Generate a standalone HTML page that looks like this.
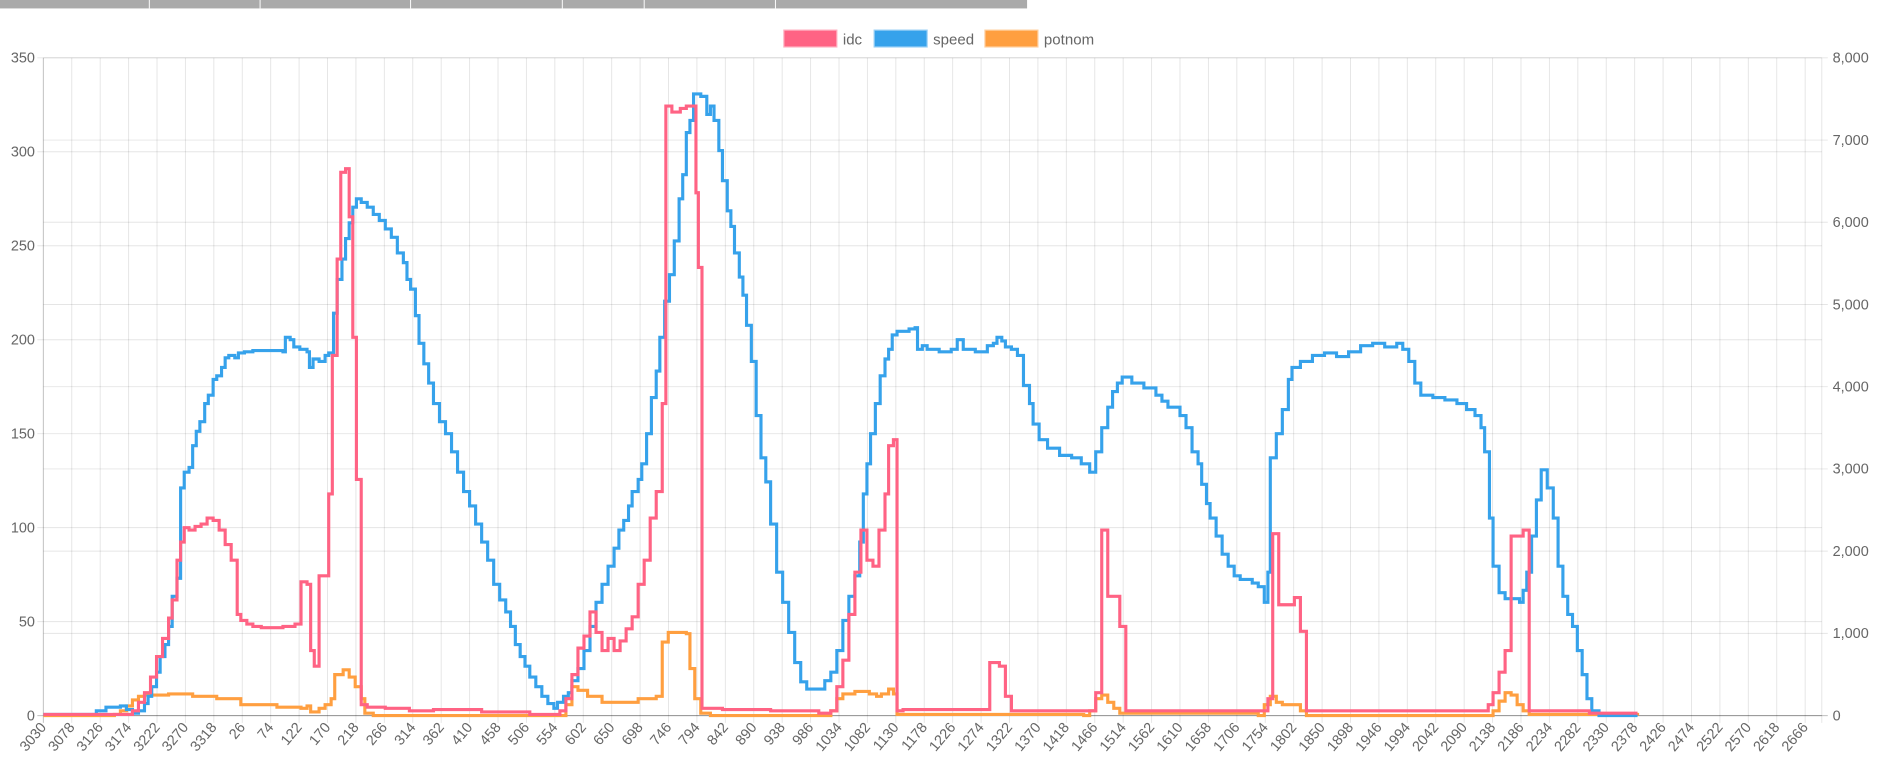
<!DOCTYPE html>
<html><head><meta charset="utf-8"><style>
html,body{margin:0;padding:0;background:#fff;overflow:hidden}
svg{display:block}
text{font-family:"Liberation Sans",Arial,sans-serif;fill:#666}
</style></head><body>
<svg id="s" width="1888" height="771" viewBox="0 0 1568 640" preserveAspectRatio="none" xmlns="http://www.w3.org/2000/svg">
<rect x="0" y="0" width="853" height="7" fill="#aaaaaa"/>
<g stroke="#fff" stroke-width="0.8">
<line x1="124" y1="0" x2="124" y2="7"/><line x1="216" y1="0" x2="216" y2="7"/><line x1="341" y1="0" x2="341" y2="7"/><line x1="467" y1="0" x2="467" y2="7"/><line x1="535" y1="0" x2="535" y2="7"/><line x1="644" y1="0" x2="644" y2="7"/>
</g>
<rect x="651" y="25" width="44" height="14" fill="#ff6384" stroke="#ffb1c1" stroke-width="1"/>
<text x="700" y="37" font-size="12.5">idc</text>
<rect x="726" y="25" width="44" height="14" fill="#36a2eb" stroke="#9ad0f5" stroke-width="1"/>
<text x="775" y="37" font-size="12.5">speed</text>
<rect x="818" y="25" width="44" height="14" fill="#ff9f40" stroke="#ffcf9f" stroke-width="1"/>
<text x="867" y="37" font-size="12.5">potnom</text>
<g id="grid"></g>
<g id="data" fill="none" stroke-width="2.6" stroke-linejoin="miter"></g>
</svg>
<script>
var NS="http://www.w3.org/2000/svg",g=document.getElementById('grid'),d=document.getElementById('data');
function el(t,a,p,txt){var e=document.createElementNS(NS,t);for(var k in a)e.setAttribute(k,a[k]);if(txt!=null)e.textContent=txt;(p||g).appendChild(e);return e;}
var L=36,R=1513,T=48,B=594;
var lv=[350,300,250,200,150,100,50,0];
lv.forEach(function(v,i){var y=T+i*78;el('line',{x1:31,x2:R,y1:y,y2:y,stroke:v==0?'rgba(0,0,0,0.25)':'rgba(0,0,0,0.1)','stroke-width':0.8});el('text',{x:29,y:y+4,'text-anchor':'end','font-size':12},null,String(v));});
var rv=['8,000','7,000','6,000','5,000','4,000','3,000','2,000','1,000','0'];
rv.forEach(function(v,i){var y=T+i*68.25;el('line',{x1:L,x2:1518,y1:y,y2:y,stroke:i==8?'rgba(0,0,0,0.25)':'rgba(0,0,0,0.1)','stroke-width':0.8});el('text',{x:1522,y:y+4,'font-size':12},null,v);});
var labs=[3030,3078,3126,3174,3222,3270,3318];for(var v=26;v<=2666;v+=48)labs.push(v);
labs.forEach(function(v,i){var x=L+i*23.6;el('line',{x1:x,x2:x,y1:T,y2:B+6,stroke:i==0?'rgba(0,0,0,0.25)':'rgba(0,0,0,0.1)','stroke-width':0.8});el('text',{x:x+3,y:604,'text-anchor':'end','font-size':12,transform:'rotate(-50 '+(x+3)+' 604)'},null,String(v));});
el('line',{x1:R,x2:R,y1:T,y2:B+6,stroke:'rgba(0,0,0,0.1)','stroke-width':0.8});
function step(p){var s='M'+p[0]+' '+p[1];for(var i=2;i<p.length;i+=2){s+='L'+p[i]+' '+p[i-1]+'L'+p[i]+' '+p[i+1];}return s;}
var sp=[36,593,75,593,80,590,88,587,100,586,105,589,110,592,115,590,120,584,123,578,126,570,130,558,133,545,137,535,140,520,143,495,147,480,150,405,153,392,157,388,160,370,163,358,166,350,170,335,173,328,177,315,180,312,184,305,187,297,190,295,195,297,198,293,203,292,210,291,235,292,237,280,241,282,244,288,249,290,255,292,257,305,260,298,265,300,270,295,273,293,277,260,280,232,284,215,287,198,290,185,293,172,296,165,300,168,305,172,310,178,315,183,320,190,325,197,330,210,335,218,338,232,341,240,345,262,348,285,352,302,356,318,360,335,365,350,370,360,375,375,380,392,385,408,390,420,395,435,400,450,405,465,410,485,415,498,420,508,424,520,428,535,432,545,436,553,440,562,445,570,450,578,455,584,460,588,463,583,468,578,472,575,475,565,480,555,485,540,490,520,495,500,500,485,505,470,510,455,514,440,518,432,522,420,525,408,530,398,533,385,537,360,541,330,545,308,548,280,552,250,556,228,560,200,564,165,567,145,570,110,573,100,576,78,582,80,587,95,590,88,593,100,597,125,600,150,604,175,607,188,610,210,614,230,617,245,620,270,624,300,628,345,632,380,636,400,640,435,645,475,650,500,655,525,660,550,665,566,670,572,678,572,685,565,690,558,695,540,700,515,705,495,710,478,714,450,717,410,720,385,723,360,727,335,731,312,735,298,738,290,741,278,745,275,755,273,760,272,762,290,766,287,770,290,780,292,790,290,795,282,800,290,810,292,820,287,825,285,828,280,832,283,835,288,840,290,845,295,850,320,855,335,858,352,863,365,870,372,880,378,890,380,898,385,905,392,910,375,915,355,920,338,924,325,928,318,932,313,940,318,950,322,960,328,965,333,970,338,980,345,985,355,990,375,995,385,998,402,1002,418,1005,430,1010,445,1015,460,1020,470,1025,478,1030,481,1040,484,1045,487,1050,500,1053,475,1055,380,1060,360,1065,340,1070,315,1073,305,1080,300,1090,295,1100,293,1110,296,1120,292,1130,287,1140,285,1150,288,1160,285,1165,290,1170,300,1175,318,1180,328,1190,330,1200,332,1210,335,1218,340,1225,345,1230,355,1233,375,1237,430,1240,470,1245,492,1250,497,1262,500,1265,490,1268,475,1272,445,1276,415,1280,390,1285,405,1290,430,1294,470,1298,495,1302,510,1306,520,1310,540,1314,560,1318,580,1322,590,1328,594,1360,594];
var id=[36,593,100,593,110,590,115,583,120,575,125,562,130,545,135,530,140,513,143,498,147,465,150,450,153,438,157,440,162,437,167,435,172,430,177,432,182,440,187,452,192,465,197,510,200,515,205,518,210,520,217,521,225,521,235,520,245,518,250,483,255,485,258,540,261,553,265,478,270,478,273,410,276,295,280,215,283,143,287,140,290,180,293,280,296,398,300,585,305,587,320,588,340,590,360,589,400,591,440,593,460,593,465,590,470,580,475,560,480,538,485,528,490,508,495,525,500,540,505,530,510,540,515,532,520,522,525,512,530,485,535,465,540,430,545,408,550,335,553,88,558,93,565,90,570,88,575,88,578,160,580,222,583,588,600,589,640,590,680,592,690,590,695,570,700,548,705,510,710,475,715,440,720,465,725,470,730,440,735,410,738,370,742,365,745,590,750,589,820,589,822,550,830,553,835,578,840,590,905,590,910,575,915,440,920,495,925,495,930,520,935,590,1050,590,1053,580,1057,443,1062,502,1070,502,1075,496,1080,524,1085,590,1230,590,1236,585,1240,575,1245,558,1250,540,1255,445,1260,445,1265,440,1270,590,1290,590,1320,592,1360,592];
var po=[36,594,80,594,95,593,100,590,105,586,110,581,115,578,120,577,140,576,160,578,180,580,200,585,230,587,250,588,255,586,258,591,265,588,270,585,275,580,278,560,285,556,290,562,295,570,300,580,303,592,310,594,460,594,470,585,475,570,480,573,488,578,500,583,520,583,530,580,545,578,550,533,555,525,570,526,573,555,577,580,582,592,590,594,680,594,690,590,695,580,700,576,710,574,722,576,728,578,732,576,738,572,742,576,745,593,900,594,905,590,910,580,915,577,920,583,925,588,930,592,1045,594,1050,585,1055,578,1060,583,1065,585,1075,585,1080,590,1085,594,1235,594,1240,590,1245,582,1250,575,1255,577,1260,585,1265,590,1270,593,1360,594];
el('path',{d:step(po),stroke:'#ff9f40'},d);
el('path',{d:step(sp),stroke:'#36a2eb'},d);
el('path',{d:step(id),stroke:'#ff6384'},d);
</script>
</body></html>
